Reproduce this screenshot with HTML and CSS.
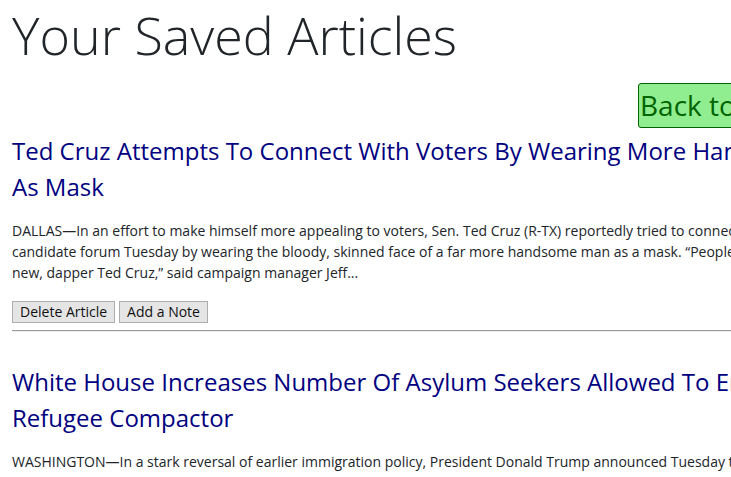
FILE: index.html
```html
<!DOCTYPE html>
<html lang="en">
<head>
<meta charset="utf-8">
<title>Saved Articles</title>
<link rel="stylesheet" href="styles.css">
</head>
<body>
<div class="page">
  <h1 class="page-title">Your Saved Articles</h1>
  <button class="back-btn" type="button">Back to Articles</button>

  <article class="article">
    <h2 class="article-title">Ted Cruz Attempts To Connect With Voters By Wearing More Handsome Face As Mask</h2>
    <p class="summary">DALLAS—In an effort to make himself more appealing to voters, Sen. Ted Cruz (R-TX) reportedly tried to connect with voters at a candidate forum Tuesday by wearing the bloody, skinned face of a far more handsome man as a mask. “People will totally love the new, dapper Ted Cruz,” said campaign manager Jeff...</p>
    <div class="actions">
      <button class="btn" type="button">Delete Article</button>
      <button class="btn" type="button">Add a Note</button>
    </div>
    <hr class="divider">
  </article>

  <article class="article">
    <h2 class="article-title">White House Increases Number Of Asylum Seekers Allowed To Enter Refugee Compactor</h2>
    <p class="summary">WASHINGTON—In a stark reversal of earlier immigration policy, President Donald Trump announced Tuesday that the administration would increase the number of asylum seekers allowed to enter the refugee compactor...</p>
    <div class="actions">
      <button class="btn" type="button">Delete Article</button>
      <button class="btn" type="button">Add a Note</button>
    </div>
    <hr class="divider">
  </article>
</div>
</body>
</html>
```
FILE: styles.css
```css
html {
  overflow: hidden;
}

body {
  margin: 0;
  background: #ffffff;
  color: #212529;
  font-family: "Open Sans", "Noto Sans", sans-serif;
}

.page {
  width: 860px;
  padding-left: 12px;
}

.page-title {
  margin: 4px 0 0;
  font-size: 52px;
  font-weight: 300;
  line-height: 62px;
  color: #212529;
  white-space: nowrap;
}

.back-btn {
  display: block;
  margin: 17px 0 0 626px;
  height: 45px;
  padding: 0 1px;
  border: 1px solid #006400;
  border-radius: 3px;
  background: #90ee90;
  color: #006400;
  font-family: "Open Sans", "Noto Sans", sans-serif;
  font-size: 28px;
  line-height: 43px;
  white-space: nowrap;
}

.article-title {
  margin: 5px 0 0;
  font-size: 24px;
  font-weight: 400;
  line-height: 36px;
  color: #000080;
}

.summary {
  margin: 15px 0 0;
  font-size: 14px;
  line-height: 21px;
  color: #212529;
}

.actions {
  display: flex;
  gap: 4px;
  margin-top: 18px;
}

.btn {
  height: 22px;
  padding: 0 7px;
  border: 1px solid #adadad;
  border-radius: 0;
  background: #e5e5e5;
  color: #111111;
  font-family: "Open Sans", "Noto Sans", sans-serif;
  font-size: 14px;
  line-height: 20px;
}

.divider {
  margin: 7px 0 32px;
  border: 0;
  border-top: 1px solid #9a9a9a;
  border-bottom: 1px solid #eeeeee;
  height: 0;
}
```
